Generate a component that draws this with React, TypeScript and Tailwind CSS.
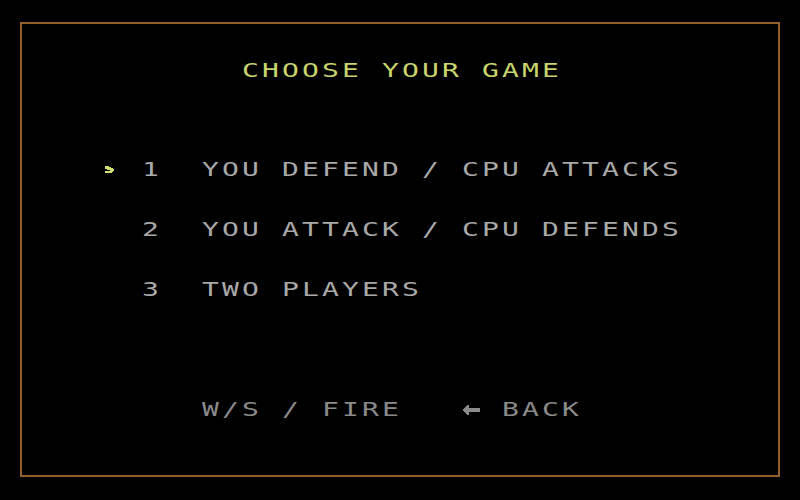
import React from "react";

// 20px character cells: DejaVu Sans Mono stretched 1.4x to get the wide blocky look
const MONO =
  "inline-block origin-left scale-x-[1.4] font-['DejaVu_Sans_Mono','Liberation_Mono',monospace] text-[20px] leading-5 tracking-[2.246px] whitespace-pre";

const modes = [
  { id: 1, label: "YOU DEFEND / CPU ATTACKS" },
  { id: 2, label: "YOU ATTACK / CPU DEFENDS" },
  { id: 3, label: "TWO PLAYERS" },
];

function Cells({ text, className = "" }: { text: string; className?: string }) {
  return (
    <span className="block pl-[1.5px] shrink-0" style={{ width: text.length * 20 }}>
      <span className={`${MONO} ${className}`}>{text}</span>
    </span>
  );
}

function Pointer() {
  return (
    <svg width="9" height="8" viewBox="0 0 9 8" className="block" shapeRendering="crispEdges">
      <path
        d="M0 0h4v1h2v1h2v1h1v2h-1v1h-1v1h-7v-2h5v-1h-3v-1h-2z"
        fill="#d2de6e"
      />
    </svg>
  );
}

function BackArrow() {
  return (
    <svg width="18" height="10" viewBox="0 0 18 10" className="block" shapeRendering="crispEdges">
      <path d="M0 5L6 0h1v3h11v4H7v3H6z" fill="#8a8a8a" />
    </svg>
  );
}

export default function App() {
  const selected = 1;

  return (
    <div className="w-[800px] h-[500px] bg-black pt-[22px] px-5">
      <div className="h-[455px] border-2 border-[#93602b] flex flex-col">
        <div className="mt-[35px] ml-[218px] flex h-5">
          <Cells text="CHOOSE YOUR GAME" className="text-[#c8d46c]" />
        </div>

        <div className="mt-[81px] flex flex-col gap-10 ml-[78px]">
          {modes.map((m) => (
            <div key={m.id} className="flex items-center h-5">
              <div className="w-10 h-5 flex items-center pl-[5px] shrink-0">
                {m.id === selected && <Pointer />}
              </div>
              <Cells text={`${m.id}  ${m.label}`} className="text-[#a9a9a9]" />
            </div>
          ))}
        </div>

        <div className="mt-[100px] ml-[178px] flex items-center h-5">
          <Cells text="W/S / FIRE   " className="text-[#8a8a8a]" />
          <div className="w-5 h-5 flex items-center pl-[2px] shrink-0">
            <BackArrow />
          </div>
          <Cells text=" BACK" className="text-[#8a8a8a]" />
        </div>
      </div>
    </div>
  );
}
